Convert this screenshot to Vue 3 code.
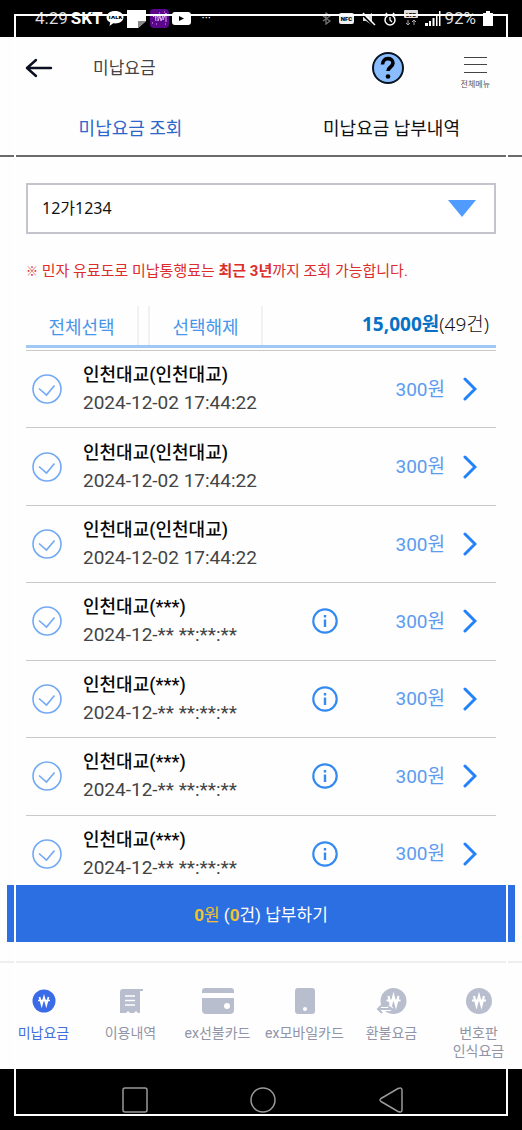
<script setup>
import { ref } from 'vue'

const vehicle = ref('12가1234')
const rows = ref([
  ...Array.from({ length: 3 }, () => ({ name: '인천대교(인천대교)', date: '2024-12-02 17:44:22', info: false, checked: false })),
  ...Array.from({ length: 4 }, () => ({ name: '인천대교(***)', date: '2024-12-** **:**:**', info: true, checked: false })),
])
const setAll = (value) => rows.value.forEach((row) => { row.checked = value })
</script>

<template>
  <div class="screen">
    <div class="status">
      <div class="status-group">
        <span class="clock">4:29</span>
        <b class="carrier">SKT</b>
        <svg width="18" height="17" viewBox="0 0 18 17">
          <path d="M9 1C4 1 .5 3.700 .5 7.200c0 2.300 1.500 4.300 3.700 5.300L3.500 16l3.700-2.700c5.700.7 10.300-2 10.300-6.100C17.500 3.700 14 1 9 1z" fill="#fff" />
          <text x="9" y="9" text-anchor="middle" class="tiny">TALK</text>
        </svg>
        <svg width="20" height="20" viewBox="0 0 20 20">
          <path d="M0 1h19v11l-8 7H0z" fill="#fff" /><path d="M11 19v-7h8z" fill="#888" />
        </svg>
        <svg width="19" height="19" viewBox="0 0 19 19">
          <rect width="19" height="19" rx="4" fill="#5b078c" />
          <path d="M3 8l2-2 1 6M5 9l3-2v5l2-5 1 5 2-6v5l3-7v9M2 14h1M6 15h1M15 15h1M9 4h1M14 3h1" fill="none" stroke="#d9a9ec" />
        </svg>
        <svg width="19" height="13" viewBox="0 0 19 13">
          <rect width="19" height="13" rx="3" fill="#fff" /><path d="M7 4l5 2.500-5 2.500z" fill="#000" />
        </svg>
        <span class="more">···</span>
      </div>
      <div class="status-group right">
        <svg width="9" height="13" viewBox="0 0 9 13"><path d="M1 4l7 5-4 3V1l4 3-7 5" fill="none" stroke="#777" stroke-width="1.300" /></svg>
        <svg class="nfc" width="15" height="11" viewBox="0 0 15 11">
          <rect width="15" height="11" rx="2" fill="#eee" /><text x="7.500" y="8" text-anchor="middle" class="tiny">NFC</text>
        </svg>
        <svg width="14" height="14" viewBox="0 0 14 14"><path d="M1 5h3l6-4v12L4 9H1z" fill="#ddd" /><path d="M0 2l12 12" stroke="#000" stroke-width="2" /><path d="M1 1l12 12" stroke="#fff" stroke-width="1.500" /></svg>
        <svg width="14" height="14" viewBox="0 0 14 14"><circle cx="7" cy="8" r="5" fill="none" stroke="#fff" stroke-width="1.500" /><path d="M7 5v3l2 2M1 4l3-3M13 4l-3-3" fill="none" stroke="#fff" stroke-width="1.300" /></svg>
        <svg width="14" height="17" viewBox="0 0 14 17"><rect y="0" width="14" height="8" rx="1" fill="#ddd" /><text x="7" y="7" text-anchor="middle" class="tiny">LTE</text><path d="M4 10v5M2 13l2 2 2-2M10 15v-5M8 12l2-2 2 2" fill="none" stroke="#aaa" /></svg>
        <svg width="16" height="15" viewBox="0 0 16 15"><path d="M0 15v-3h3v3zM4 15v-5h2v5zM7.500 15V7h2v8zM11 15V4h1.500v11zM14 15V0h1.500v15z" fill="#fff" /></svg>
        <span class="percent">92%</span>
        <svg width="10" height="15" viewBox="0 0 10 15"><path d="M3 0h4v2h3v13H0V2h3z" fill="#fff" /></svg>
      </div>
    </div>

    <header class="header">
      <button class="back" aria-label="뒤로">
        <svg width="28" height="20" viewBox="0 0 28 20"><path d="M11 2L2 10l9 8M2 10h24" fill="none" stroke="#0a1022" stroke-width="2.400" stroke-linecap="round" stroke-linejoin="round" /></svg>
      </button>
      <h1>미납요금</h1>
      <button class="help" aria-label="도움말">
        <svg width="34" height="34" viewBox="0 0 34 34">
          <circle cx="17" cy="17" r="15" fill="#8abdff" stroke="#091421" stroke-width="2" />
          <path d="M11.500 13.500C11.500 5.800 22 6 22 12c0 4-5 4-5 8" fill="none" stroke="#000" stroke-width="3.600" /><circle cx="17" cy="25.500" r="2.300" />
        </svg>
      </button>
      <button class="menu">
        <svg width="23" height="18" viewBox="0 0 23 18"><path d="M0 1.500h23M0 8.500h23M0 16.500h23" stroke="#444" stroke-width="1.200" /></svg>
        <span>전체메뉴</span>
      </button>
    </header>

    <nav class="tabs">
      <a href="#" class="active">미납요금 조회</a>
      <a href="#">미납요금 납부내역</a>
    </nav>

    <main class="content">
      <div class="vehicle">
        <select v-model="vehicle" aria-label="차량번호"><option>12가1234</option></select>
        <svg width="28" height="17" viewBox="0 0 28 17"><path d="M0 0h28L14 17z" fill="#4f9bff" /></svg>
      </div>
      <p class="notice"><b class="mark">※</b> 민자 유료도로 미납통행료는 <b>최근 3년</b>까지 조회 가능합니다.</p>

      <div class="toolbar">
        <button @click="setAll(true)">전체선택</button>
        <button @click="setAll(false)">선택해제</button>
        <p class="total"><b>15,000원</b>(49건)</p>
      </div>

      <ul class="list">
        <li v-for="(row, i) in rows" :key="i">
          <label class="check">
            <input v-model="row.checked" type="checkbox" :aria-label="row.name">
            <svg width="30" height="30" viewBox="0 0 30 30">
              <circle cx="15" cy="15" r="14" fill="none" stroke="#72a9f5" stroke-width="1.600" />
              <path d="M7 14.500l7.500 6.500 8-9.500" fill="none" stroke="#72a9f5" stroke-width="1.600" />
            </svg>
          </label>
          <div class="detail">
            <strong>{{ row.name }}</strong>
            <span>{{ row.date }}</span>
          </div>
          <button v-if="row.info" class="info" aria-label="안내">
            <svg width="26" height="26" viewBox="0 0 26 26"><circle cx="13" cy="13" r="11.700" fill="none" stroke="#338af0" stroke-width="2.200" /><path d="M13 11.500V19M13 7v2.500" stroke="#338af0" stroke-width="2.400" /></svg>
          </button>
          <span class="price">300원</span>
          <button class="go" aria-label="상세">
            <svg width="14" height="24" viewBox="0 0 14 24"><path d="M2 2l10 10L2 22" fill="none" stroke="#2382fa" stroke-width="3" stroke-linecap="round" /></svg>
          </button>
        </li>
      </ul>
    </main>

    <button class="pay"><em><b>0</b>원</em> (<em><b>0</b></em>건) 납부하기</button>

    <nav class="bottom">
      <a href="#" class="active">
        <svg width="38" height="28" viewBox="0 0 38 28"><circle cx="19" cy="14" r="11.500" fill="#3b6ce8" /><path d="M14.500 10l2.200 8L19 10l2.300 8 2.200-8M13 13.500h12" fill="none" stroke="#fff" stroke-width="1.700" /></svg>
        <span>미납요금</span>
      </a>
      <a href="#">
        <svg width="38" height="28" viewBox="0 0 38 28"><path d="M8 26V5q0-3 3-3h20v2h-3v22h-2l-2-2-2 2h-4l-2-2-2 2z" fill="#b9bece" /><path d="M13 9h10M13 13.500h10M13 18h10" stroke="#fff" stroke-width="1.700" /></svg>
        <span>이용내역</span>
      </a>
      <a href="#">
        <svg width="38" height="28" viewBox="0 0 38 28"><path d="M3 6V4q0-3 3-3h26q3 0 3 3v2zM3 11h32v12q0 4-4 4H7q-4 0-4-4z" fill="#b9bece" /><circle cx="28" cy="19" r="3" fill="#fff" /></svg>
        <span>ex선불카드</span>
      </a>
      <a href="#">
        <svg width="38" height="28" viewBox="0 0 38 28"><rect x="9" y="1" width="20" height="26" rx="3" fill="#b9bece" /><circle cx="19" cy="22" r="2" fill="#fff" /></svg>
        <span>ex모바일카드</span>
      </a>
      <a href="#">
        <svg width="38" height="28" viewBox="0 0 38 28"><circle cx="20.500" cy="14" r="13" fill="#b9bece" /><path d="M15.500 9l2.500 9.500L20.500 9l2.500 9.500L25.500 9M13.500 13.500h14" fill="none" stroke="#fff" stroke-width="2.200" /><path d="M4 22h14M8 18l-4 4 4 4M15 19l4 3" fill="none" stroke="#fff" stroke-width="4" /><path d="M5 22h14M9 18l-4 4 4 4M15 19l4 3" fill="none" stroke="#b9bece" stroke-width="2" /></svg>
        <span>환불요금</span>
      </a>
      <a href="#">
        <svg width="38" height="28" viewBox="0 0 38 28"><circle cx="19" cy="14" r="13" fill="#b9bece" /><path d="M14 9l2.500 9.500L19 9l2.500 9.500L24 9M12 13.500h14" fill="none" stroke="#fff" stroke-width="2.200" /></svg>
        <span>번호판<br>인식요금</span>
      </a>
    </nav>

    <div class="system">
      <button aria-label="최근 앱"><svg width="26" height="26" viewBox="0 0 26 26"><rect x="1" y="1" width="24" height="24" rx="2" /></svg></button>
      <button aria-label="홈"><svg width="26" height="26" viewBox="0 0 26 26"><circle cx="13" cy="13" r="12" /></svg></button>
      <button aria-label="이전"><svg width="26" height="26" viewBox="0 0 26 26"><path d="M3 11.500L20 1.500q4-1.500 4 1.500v20q0 3-4 1.500L3 14.500q-2-1.500 0-3z" /></svg></button>
    </div>
    <div class="frame"></div>
  </div>
</template>

<style>
body { margin: 0; background: #fff; }
</style>

<style scoped>
* { box-sizing: border-box; }
.screen {
  position: relative;
  display: flex;
  flex-direction: column;
  min-height: 100vh;
  background: #fefefe;
  color: #111;
  font-family: Roboto, "Noto Sans CJK KR", sans-serif;
}
button { padding: 0; border: 0; background: none; color: inherit; font: inherit; cursor: pointer; }
a { color: inherit; text-decoration: none; }
svg { display: block; flex: none; }
p, h1, ul { margin: 0; padding: 0; }

.frame { position: absolute; inset: 14px; border: 2px solid #fff; pointer-events: none; }

.status {
  display: flex;
  justify-content: space-between;
  height: 37px;
  padding: 0 29px 0 35px;
  background: #000;
  color: #fff;
  font-size: 17px;
  line-height: 37px;
}
.status-group { display: flex; align-items: center; gap: 3px; }
.clock, .percent { color: #ddd; }
.right { gap: 7px; }
.right .percent { margin-left: -4px; }
.right .nfc { margin: 0 1px; }
.more { margin-left: 8px; font-size: 12px; }
.tiny { font-size: 6px; font-weight: 900; }

.header { display: flex; align-items: center; height: 62px; padding: 0 32px 0 25px; }
.header h1 { flex: 1; margin-left: 40px; font-size: 17px; font-weight: 400; line-height: 24px; color: #444; }
.menu { display: flex; flex-direction: column; align-items: center; gap: 5px; margin-left: 56px; padding-top: 10px; color: #555; font-size: 8px; line-height: 12px; }

.tabs { display: grid; grid-template-columns: 1fr 1fr; height: 58px; border-bottom: 2px solid #6b6b6b; text-align: center; font-size: 18px; line-height: 60px; }
.tabs .active { color: #2c66ca; }

.content { display: flex; flex: 1; flex-direction: column; padding: 26px 26px 0; }
.vehicle { display: grid; align-items: center; }
.vehicle > * { grid-area: 1 / 1; }
.vehicle select {
  appearance: none;
  width: 100%;
  height: 51px;
  padding: 0 14px 2px;
  border: 2px solid #c4c4cc;
  border-radius: 0;
  background: #fff;
  color: #111;
  font-family: "Noto Sans", "Noto Sans CJK KR", sans-serif;
  font-size: 16px;
}
.vehicle svg { justify-self: end; margin-right: 20px; pointer-events: none; }
.notice { margin-top: 26px; color: #dc2c2c; font-size: 15px; line-height: 22px; }
.mark { font-size: 12px; line-height: 12px; }

.toolbar { display: flex; margin-top: 24px; height: 42px; border-bottom: 3px solid #9fc8f5; }
.toolbar button { width: 113px; border-right: 2px solid #f1f1f1; color: #4795eb; font-size: 18px; }
.toolbar button + button { width: 115px; margin-left: 9px; border-left: 2px solid #f1f1f1; }
.total { flex: 1; padding-right: 7px; text-align: right; font-family: "Noto Sans", "Noto Sans CJK KR", sans-serif; font-size: 19px; line-height: 36px; font-weight: 300; white-space: nowrap; }
.total b { color: #0672c6; font-weight: 700; }

.list { display: grid; flex: 1; grid-auto-rows: 1fr; margin-top: 2px; list-style: none; }
.list li { display: grid; grid-template-columns: 57px 1fr 57px 76px 51px; align-items: center; border-top: 1px solid #c9c9c9; }
.check { display: grid; width: 30px; margin-left: 6px; }
.check > * { grid-area: 1 / 1; }
.check input { appearance: none; width: 30px; height: 30px; margin: 0; border-radius: 50%; }
.check input:checked { background: #e3efff; }
.check svg { pointer-events: none; }
.detail { display: flex; flex-direction: column; color: #444; font-size: 19px; line-height: 28px; white-space: nowrap; }
.detail strong { color: #080808; font-size: 18px; font-weight: 500; }
.info { grid-column: 3; justify-self: start; }
.price { grid-column: 4; padding-bottom: 4px; color: #5b9cf0; font-size: 19px; text-align: right; }
.go { grid-column: 5; justify-self: start; margin-left: 18px; }

.pay { z-index: 0; height: 57px; margin: -7px 7px 0; background: #2b6fe2; color: #fff; font-size: 17px; }
.pay em { color: #f4c22c; font-style: normal; }

.bottom { display: grid; grid-template-columns: repeat(6, 1fr); height: 108px; margin-top: 19px; padding-top: 24px; border-top: 2px solid #eee; color: #9094a6; font-size: 14px; line-height: 18px; text-align: center; white-space: nowrap; }
.bottom a { display: flex; flex-direction: column; align-items: center; gap: 9px; }
.bottom .active { color: #3f6fdc; }

.system { display: grid; grid-template-columns: repeat(3, 128px); justify-content: center; justify-items: center; align-items: center; height: 61px; padding-left: 4px; background: #000; }
.system svg { fill: none; stroke: #999; stroke-width: 1.5; }
</style>
